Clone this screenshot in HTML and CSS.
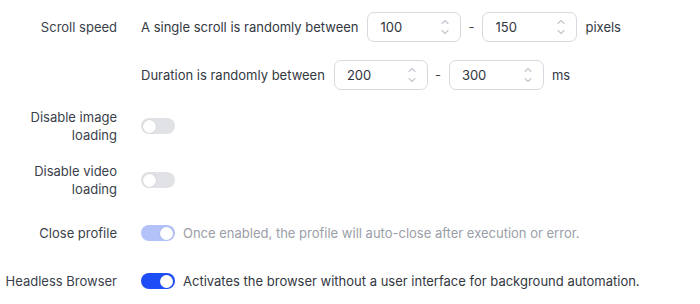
FILE: index.html
```html
<!DOCTYPE html>
<html>
<head>
<meta charset="utf-8">
<link rel="stylesheet" href="styles.css">
</head>
<body>
<div class="form">
  <div class="label">Scroll speed</div>
  <div class="content">
    <span class="text">A single scroll is randomly between</span>
    <div class="num w94"><span class="val">100</span><span class="spin"><svg width="10" height="20" viewBox="0 0 10 20"><path d="M2 6.5 L5 3.5 L8 6.5" /><path d="M2 13.5 L5 16.5 L8 13.5" /></svg></span></div>
    <span class="dash">-</span>
    <div class="num w95"><span class="val">150</span><span class="spin"><svg width="10" height="20" viewBox="0 0 10 20"><path d="M2 6.5 L5 3.5 L8 6.5" /><path d="M2 13.5 L5 16.5 L8 13.5" /></svg></span></div>
    <span class="text">pixels</span>
  </div>

  <div class="label"></div>
  <div class="content">
    <span class="text">Duration is randomly between</span>
    <div class="num w94"><span class="val">200</span><span class="spin"><svg width="10" height="20" viewBox="0 0 10 20"><path d="M2 6.5 L5 3.5 L8 6.5" /><path d="M2 13.5 L5 16.5 L8 13.5" /></svg></span></div>
    <span class="dash">-</span>
    <div class="num w95"><span class="val">300</span><span class="spin"><svg width="10" height="20" viewBox="0 0 10 20"><path d="M2 6.5 L5 3.5 L8 6.5" /><path d="M2 13.5 L5 16.5 L8 13.5" /></svg></span></div>
    <span class="text">ms</span>
  </div>

  <div class="label">Disable image loading</div>
  <div class="content"><span class="toggle"><span class="knob"></span></span></div>

  <div class="label">Disable video loading</div>
  <div class="content"><span class="toggle"><span class="knob"></span></span></div>

  <div class="label shift">Close profile</div>
  <div class="content shift"><span class="toggle on disabled"><span class="knob"></span></span><span class="desc muted">Once enabled, the profile will auto-close after execution or error.</span></div>

  <div class="label">Headless Browser</div>
  <div class="content"><span class="toggle on"><span class="knob"></span></span><span class="desc">Activates the browser without a user interface for background automation.</span></div>
</div>
</body>
</html>
```

FILE: styles.css
```css
html, body {
  margin: 0;
  padding: 0;
  background: #ffffff;
}
body {
  font-family: Inter, "Noto Sans", sans-serif;
  font-size: 13px;
  line-height: 18px;
  color: #333842;
}
.form {
  display: grid;
  grid-template-columns: 112px 1fr;
  column-gap: 24px;
  row-gap: 18px;
  padding: 12px 0 0 5px;
  align-items: center;
}
.label {
  text-align: right;
  color: #3a3f4b;
}
.shift {
  margin-top: 2px;
}
.content {
  display: flex;
  align-items: center;
  min-height: 30px;
}
.text {
  white-space: nowrap;
}
.num {
  box-sizing: border-box;
  height: 30px;
  border: 1px solid #d6d9df;
  border-radius: 7px;
  display: flex;
  align-items: center;
  justify-content: space-between;
  padding: 0 10px 0 12px;
  color: #30343c;
}
.text + .num {
  margin-left: 9px;
}
.w94 { width: 94px; }
.w95 { width: 95px; }
.spin {
  display: flex;
  align-items: center;
}
.spin svg path {
  fill: none;
  stroke: #c3c7ce;
  stroke-width: 1.1;
  stroke-linecap: round;
  stroke-linejoin: round;
}
.dash {
  margin: 0 8px 0 7px;
  color: #444;
}
.num + .text {
  margin-left: 8px;
}
.toggle {
  position: relative;
  display: inline-block;
  box-sizing: border-box;
  width: 34px;
  height: 16px;
  border-radius: 8px;
  background: #e1e2e6;
  flex: none;
}
.knob {
  position: absolute;
  top: 1.5px;
  left: 2px;
  width: 13px;
  height: 13px;
  border-radius: 50%;
  background: #ffffff;
  box-shadow: 0 0 0 0.5px rgba(0,0,0,0.08);
}
.toggle.on {
  background: #1d4ef5;
}
.toggle.on .knob {
  left: 19px;
}
.toggle.on.disabled {
  background: #b4c2fa;
}
.desc {
  margin-left: 8px;
  white-space: nowrap;
  color: #333842;
}
.desc.muted {
  color: #9a9ea8;
}
```
